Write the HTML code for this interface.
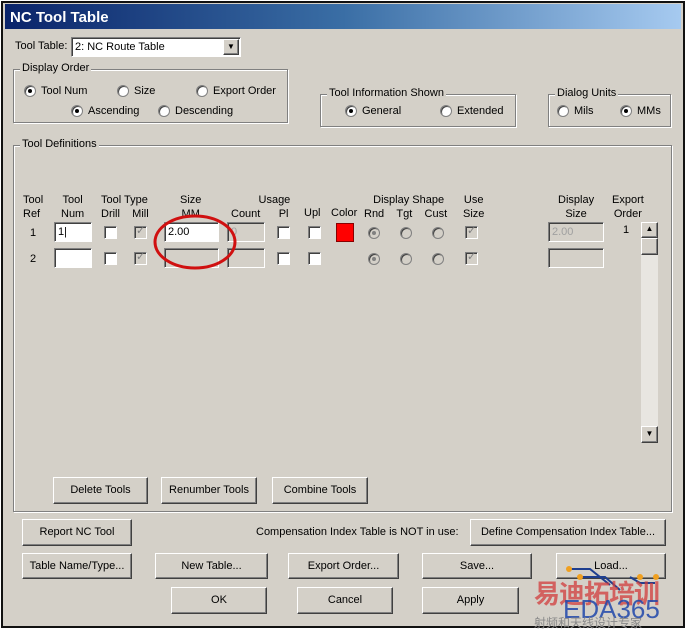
<!DOCTYPE html>
<html><head><meta charset="utf-8"><style>
*{box-sizing:border-box;margin:0;padding:0}
body{width:687px;height:630px;background:#fff;position:relative;overflow:hidden;font-family:"Liberation Sans",sans-serif;font-size:11px;color:#000}
.win{position:absolute;left:1px;top:1px;width:684px;height:627px;border:2px solid #111;background:#d4d0c8}
.title{position:absolute;left:2px;top:1px;right:2px;height:25px;background:linear-gradient(90deg,#0a246a,#3a6ea5 50%,#a6caf0);color:#fff;font-weight:bold;font-size:15px;padding:5px 0 0 5px}
.a{position:absolute;white-space:nowrap}
.grp{position:absolute;border:1px solid #808080;box-shadow:1px 1px 0 #fff,inset 1px 1px 0 #fff}
.grp>span{position:absolute;top:-8px;left:6px;background:#d4d0c8;padding:0 2px}
.btn{position:absolute;background:#d4d0c8;border:1px solid;border-color:#fff #404040 #404040 #fff;box-shadow:inset -1px -1px 0 #808080;text-align:center;line-height:24px}
.edit{position:absolute;background:#fff;border:1px solid;border-color:#808080 #fff #fff #808080;box-shadow:inset 1px 1px 0 #404040;height:20px;padding:2px 3px;line-height:15px}
.dis{background:#d4d0c8;color:#a0a0a0}
.rad{position:absolute;width:12px;height:12px;border-radius:50%;background:#fff;border:1px solid #808080;box-shadow:inset 1px 1px 0 #404040}
.rad.on::after{content:"";position:absolute;left:3px;top:3px;width:4px;height:4px;border-radius:50%;background:#000}
.rad.g{background:#d4d0c8}.rad.g.on::after{background:#808080}
.chk{position:absolute;width:13px;height:13px;background:#fff;border:1px solid;border-color:#808080 #fff #fff #808080;box-shadow:inset 1px 1px 0 #404040}
.chk.g{background:#d4d0c8}
.chk.g.on::after{content:"✓";position:absolute;left:1px;top:-3px;font-size:11px;color:#808080}
.c{text-align:center}
</style></head><body>
<div class="win">
<div class="title">NC Tool Table</div>
</div>
<div class="a" style="left:15px;top:40px">Tool Table:</div>
<div class="edit" style="left:71px;top:37px;width:170px;height:20px">2: NC Route Table</div>
<div class="btn" style="left:223px;top:39px;width:16px;height:16px;line-height:14px;font-size:8px">▼</div>

<div class="grp" style="left:13px;top:69px;width:275px;height:54px"><span>Display Order</span></div>
<div class="rad on" style="left:24px;top:85px"></div><div class="a" style="left:41px;top:85px">Tool Num</div>
<div class="rad" style="left:117px;top:85px"></div><div class="a" style="left:134px;top:85px">Size</div>
<div class="rad" style="left:196px;top:85px"></div><div class="a" style="left:213px;top:85px">Export Order</div>
<div class="rad on" style="left:71px;top:105px"></div><div class="a" style="left:88px;top:105px">Ascending</div>
<div class="rad" style="left:158px;top:105px"></div><div class="a" style="left:175px;top:105px">Descending</div>

<div class="grp" style="left:320px;top:94px;width:196px;height:33px"><span>Tool Information Shown</span></div>
<div class="rad on" style="left:345px;top:105px"></div><div class="a" style="left:362px;top:105px">General</div>
<div class="rad" style="left:440px;top:105px"></div><div class="a" style="left:457px;top:105px">Extended</div>

<div class="grp" style="left:548px;top:94px;width:123px;height:33px"><span>Dialog Units</span></div>
<div class="rad" style="left:557px;top:105px"></div><div class="a" style="left:574px;top:105px">Mils</div>
<div class="rad on" style="left:620px;top:105px"></div><div class="a" style="left:637px;top:105px">MMs</div>

<div class="grp" style="left:13px;top:145px;width:659px;height:367px"><span>Tool Definitions</span></div>

<div class="a" style="left:23px;top:193px;line-height:14px">Tool<br>Ref</div>
<div class="a c" style="left:61px;top:193px;line-height:14px">Tool<br>Num</div>
<div class="a" style="left:101px;top:193px;line-height:14px">Tool Type<br>Drill&nbsp;&nbsp;&nbsp;&nbsp;Mill</div>
<div class="a c" style="left:180px;top:193px;line-height:14px">Size<br>MM</div>
<div class="a" style="left:231px;top:193px;line-height:14px">&nbsp;&nbsp;&nbsp;&nbsp;&nbsp;&nbsp;&nbsp;&nbsp;&nbsp;Usage<br>Count&nbsp;&nbsp;&nbsp;&nbsp;&nbsp;&nbsp;Pl</div>
<div class="a" style="left:304px;top:207px">Upl</div>
<div class="a" style="left:331px;top:207px">Color</div>
<div class="a" style="left:364px;top:193px;line-height:14px">&nbsp;&nbsp;&nbsp;Display Shape<br>Rnd&nbsp;&nbsp;&nbsp;&nbsp;Tgt&nbsp;&nbsp;&nbsp;&nbsp;Cust</div>
<div class="a c" style="left:463px;top:193px;line-height:14px">Use<br>Size</div>
<div class="a c" style="left:558px;top:193px;line-height:14px">Display<br>Size</div>
<div class="a c" style="left:612px;top:193px;line-height:14px">Export<br>Order</div>

<div class="a" style="left:30px;top:227px">1</div>
<div class="edit" style="left:54px;top:222px;width:38px">1|</div>
<div class="chk" style="left:104px;top:226px"></div>
<div class="chk g on" style="left:134px;top:226px"></div>
<div class="edit" style="left:164px;top:222px;width:55px">2.00</div>
<div class="edit dis" style="left:227px;top:222px;width:38px">0</div>
<div class="chk" style="left:277px;top:226px"></div>
<div class="chk" style="left:308px;top:226px"></div>
<div class="a" style="left:336px;top:223px;width:18px;height:19px;background:#f00;border:1px solid #800"></div>
<div class="rad g on" style="left:368px;top:227px"></div>
<div class="rad g" style="left:400px;top:227px"></div>
<div class="rad g" style="left:432px;top:227px"></div>
<div class="chk g on" style="left:465px;top:226px"></div>
<div class="edit dis" style="left:548px;top:222px;width:56px">2.00</div>
<div class="a" style="left:623px;top:224px">1</div>

<div class="a" style="left:30px;top:253px">2</div>
<div class="edit" style="left:54px;top:248px;width:38px"></div>
<div class="chk" style="left:104px;top:252px"></div>
<div class="chk g on" style="left:134px;top:252px"></div>
<div class="edit dis" style="left:164px;top:248px;width:55px"></div>
<div class="edit dis" style="left:227px;top:248px;width:38px"></div>
<div class="chk" style="left:277px;top:252px"></div>
<div class="chk" style="left:308px;top:252px"></div>
<div class="rad g on" style="left:368px;top:253px"></div>
<div class="rad g" style="left:400px;top:253px"></div>
<div class="rad g" style="left:432px;top:253px"></div>
<div class="chk g on" style="left:465px;top:252px"></div>
<div class="edit dis" style="left:548px;top:248px;width:56px"></div>

<div class="a" style="left:641px;top:222px;width:17px;height:221px;background:#e8e6e1"></div>
<div class="btn" style="left:641px;top:222px;width:17px;height:16px;line-height:12px;font-size:8px">▲</div>
<div class="btn" style="left:641px;top:238px;width:17px;height:17px"></div>
<div class="btn" style="left:641px;top:426px;width:17px;height:17px;line-height:14px;font-size:8px">▼</div>

<svg class="a" style="left:150px;top:212px" width="90" height="60"><ellipse cx="45" cy="30" rx="40" ry="26" fill="none" stroke="#d01010" stroke-width="3"/></svg>

<div class="btn" style="left:53px;top:477px;width:95px;height:27px">Delete Tools</div>
<div class="btn" style="left:161px;top:477px;width:96px;height:27px">Renumber Tools</div>
<div class="btn" style="left:272px;top:477px;width:96px;height:27px">Combine Tools</div>

<div class="btn" style="left:22px;top:519px;width:110px;height:27px">Report NC Tool</div>
<div class="a" style="left:256px;top:526px">Compensation Index Table is NOT in use:</div>
<div class="btn" style="left:470px;top:519px;width:196px;height:27px">Define Compensation Index Table...</div>

<div class="btn" style="left:22px;top:553px;width:110px;height:26px">Table Name/Type...</div>
<div class="btn" style="left:155px;top:553px;width:113px;height:26px">New Table...</div>
<div class="btn" style="left:288px;top:553px;width:111px;height:26px">Export Order...</div>
<div class="btn" style="left:422px;top:553px;width:110px;height:26px">Save...</div>
<div class="btn" style="left:556px;top:553px;width:110px;height:26px">Load...</div>

<div class="btn" style="left:171px;top:587px;width:96px;height:27px">OK</div>
<div class="btn" style="left:297px;top:587px;width:96px;height:27px">Cancel</div>
<div class="btn" style="left:422px;top:587px;width:97px;height:27px">Apply</div>

<svg class="a" style="left:560px;top:560px" width="120" height="40"><path d="M9 9H30L50 25" stroke="#1f3f8f" stroke-width="2" fill="none"/><path d="M20 17H45L60 30M70 17L80 23H95" stroke="#1f3f8f" stroke-width="2" fill="none"/><circle cx="9" cy="9" r="3" fill="#f0a020"/><circle cx="20" cy="17" r="3" fill="#f0a020"/><circle cx="80" cy="17" r="3" fill="#f0a020"/><circle cx="96" cy="17" r="3" fill="#f0a020"/></svg>
<div class="a" style="left:534px;top:574px;font-size:26px;font-weight:bold;color:rgba(210,60,60,.75);font-family:'Noto Sans CJK SC',sans-serif;letter-spacing:-1px">易迪拓培训</div>
<div class="a" style="left:563px;top:594px;font-size:26px;color:rgba(30,70,170,.85)">EDA365</div>
<div class="a" style="left:534px;top:614px;font-size:12px;color:#888;font-family:'Noto Sans CJK SC',sans-serif">射频和天线设计专家</div>
</body></html>
